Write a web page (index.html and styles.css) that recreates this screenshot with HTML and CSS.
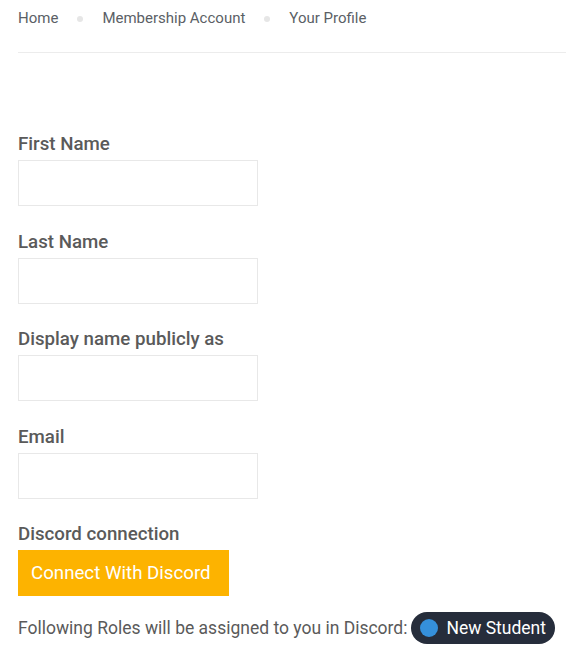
FILE: index.html
```
<!DOCTYPE html>
<html>
<head>
<meta charset="utf-8">
<link rel="stylesheet" href="styles.css">
</head>
<body>
<div class="page">
  <nav class="crumbs">
    <a class="crumb">Home</a><span class="sep"></span><a class="crumb">Membership Account</a><span class="sep"></span><span class="crumb">Your Profile</span>
  </nav>
  <form class="profile">
    <div class="field">
      <label class="label">First Name</label>
      <input class="input" type="text">
    </div>
    <div class="field">
      <label class="label">Last Name</label>
      <input class="input" type="text">
    </div>
    <div class="field">
      <label class="label">Display name publicly as</label>
      <input class="input" type="text">
    </div>
    <div class="field">
      <label class="label">Email</label>
      <input class="input" type="text">
    </div>
    <div class="field">
      <label class="label">Discord connection</label>
      <button class="discord-btn" type="button">Connect With Discord</button>
    </div>
    <p class="roles">Following Roles will be assigned to you in Discord: <span class="badge"><span class="dot"></span>New Student</span></p>
  </form>
</div>
</body>
</html>
```
FILE: styles.css
```
html, body {
  margin: 0;
  padding: 0;
  background: #fff;
}
body {
  font-family: Roboto, "Liberation Sans", sans-serif;
  color: #555;
}
.page {
  padding-left: 18px;
}
.crumbs {
  display: flex;
  align-items: center;
  padding-top: 8px;
  padding-bottom: 24px;
  border-bottom: 1px solid #ececec;
  font-size: 15px;
  line-height: 20px;
}
.crumb {
  color: #5b5f66;
  text-decoration: none;
}
.sep {
  width: 6px;
  height: 6px;
  border-radius: 50%;
  background: #e6e6e6;
  margin: 2px 19px 0 19px;
}
.profile {
  margin-top: 78px;
}
.field {
  margin-bottom: 22.5px;
}
.label {
  display: block;
  font-size: 18.7px;
  line-height: 24px;
  font-weight: 500;
  color: #5a5a5a;
  margin-top: -1px;
  padding-top: 2px;
  margin-bottom: 4px;
}
.input {
  display: block;
  box-sizing: border-box;
  width: 240px;
  height: 46px;
  border: 1px solid #e8e8e8;
  background: #fff;
  margin: 0;
}
.discord-btn {
  display: block;
  height: 46px;
  padding: 0 13px;
  width: 211px;
  border: none;
  background: #fdb300;
  color: #fff;
  font-family: Roboto, "Liberation Sans", sans-serif;
  font-size: 18.7px;
  text-align: left;
  margin: 0;
}
.roles {
  margin: -7px 0 0 0;
  font-size: 17.5px;
  line-height: 32px;
  color: #5a5a5a;
  display: flex;
  align-items: center;
  white-space: nowrap;
}
.badge {
  display: inline-flex;
  align-items: center;
  height: 32px;
  margin-left: 4px;
  padding: 0 9px;
  border-radius: 16px;
  background: #262d3b;
  color: #fff;
  font-size: 17.5px;
}
.dot {
  width: 18px;
  height: 18px;
  border-radius: 50%;
  background: #3590db;
  margin-right: 8px;
}
```
